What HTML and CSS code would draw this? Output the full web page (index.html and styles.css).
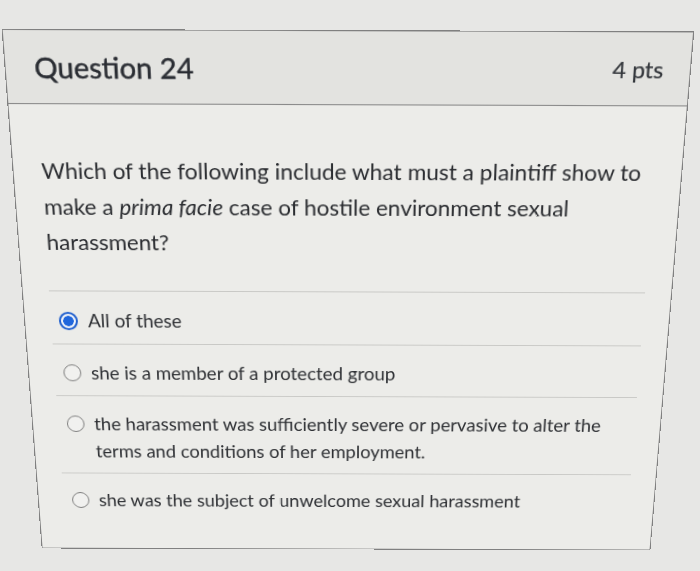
FILE: index.html
```html
<!DOCTYPE html>
<html lang="en">
<head>
<meta charset="utf-8">
<title>Question 24</title>
<link rel="stylesheet" href="styles.css">
</head>
<body>
<div class="stage">
  <section class="card">
    <header class="card-head">
      <h2 class="title">Question 24</h2>
      <span class="pts">4 pts</span>
    </header>
    <div class="card-body">
      <p class="question">Which of the following include what must a plaintiff show to make a <em>prima facie</em> case of hostile environment sexual harassment?</p>
      <ul class="answers">
        <li class="answer"><span class="radio radio-on"></span><span class="label">All of these</span></li>
        <li class="answer"><span class="radio"></span><span class="label">she is a member of a protected group</span></li>
        <li class="answer"><span class="radio"></span><span class="label">the harassment was sufficiently severe or pervasive to alter the terms and conditions of her employment.</span></li>
        <li class="answer answer-last"><span class="radio"></span><span class="label">she was the subject of unwelcome sexual harassment</span></li>
      </ul>
    </div>
  </section>
</div>
</body>
</html>
```

FILE: styles.css
```css
html, body {
  margin: 0;
  padding: 0;
  background: #e7e7e5;
}

body {
  font-family: Lato, "Noto Sans", sans-serif;
  color: #2e3034;
  height: 571px;
  overflow: hidden;
}

.stage {
  padding: 40px 0 0 23px;
}

.card {
  width: 648px;
  box-sizing: border-box;
  border: 1.5px solid #808080;
  background: #ecece9;
  transform-origin: 50% 50%;
  transform: perspective(1000px) rotateX(-14deg) rotateZ(0.2deg);
}

.card-head {
  display: flex;
  justify-content: space-between;
  align-items: center;
  padding: 17px 25px 16px 27px;
  background: #e3e3e0;
  border-bottom: 1.5px solid #8a8a8a;
}

.title {
  margin: 0;
  font-size: 27.5px;
  line-height: 34px;
  font-weight: 400;
  color: #2a2d33;
  -webkit-text-stroke: 0.4px #2a2d33;
}

.pts {
  font-size: 22px;
  line-height: 34px;
  color: #33363b;
  -webkit-text-stroke: 0.2px #33363b;
}

.card-body {
  padding: 45px 26px 31px 26px;
}

.question {
  margin: 0;
  padding-left: 1px;
  width: 600px;
  font-size: 22px;
  line-height: 35px;
  color: #2b2d31;
}

.question em {
  font-style: italic;
}

.answers {
  list-style: none;
  margin: 32px 0 0 0;
  padding: 0;
}

.answer {
  display: flex;
  align-items: flex-start;
  gap: 10px;
  padding: 15px 20px 9px 9px;
  border-top: 1px solid #c9c9c6;
  font-size: 19px;
  line-height: 30px;
  color: #2e3034;
}

.radio {
  flex: none;
  box-sizing: border-box;
  width: 18px;
  height: 18px;
  margin-top: 6px;
  border-radius: 50%;
  border: 1.5px solid #7c7c7c;
  background: #f1f1ef;
}

.radio-on {
  width: 19px;
  height: 19px;
  margin-top: 5.5px;
  margin-left: -1px;
  border: 2px solid #1f5fce;
  background: radial-gradient(circle, #1f66dc 0 5px, #f4f6fa 5.5px);
}

.label {
  flex: 1;
}
```
